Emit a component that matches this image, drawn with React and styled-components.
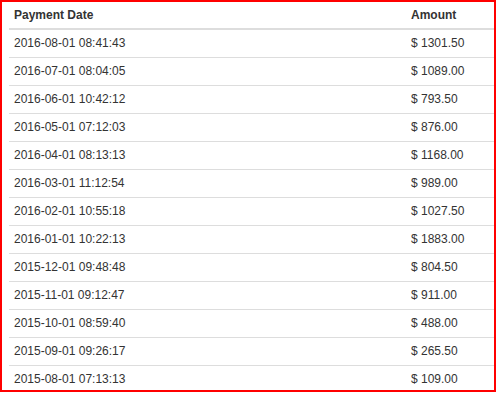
import React from "react";
import styled, { createGlobalStyle } from "styled-components";

const GlobalStyle = createGlobalStyle`
  html, body {
    margin: 0;
    padding: 0;
    background: #fff;
  }
  body {
    font-family: "Liberation Sans", Arial, sans-serif;
  }
`;

const payments = [
  { date: "2016-08-01 08:41:43", amount: "1301.50" },
  { date: "2016-07-01 08:04:05", amount: "1089.00" },
  { date: "2016-06-01 10:42:12", amount: "793.50" },
  { date: "2016-05-01 07:12:03", amount: "876.00" },
  { date: "2016-04-01 08:13:13", amount: "1168.00" },
  { date: "2016-03-01 11:12:54", amount: "989.00" },
  { date: "2016-02-01 10:55:18", amount: "1027.50" },
  { date: "2016-01-01 10:22:13", amount: "1883.00" },
  { date: "2015-12-01 09:48:48", amount: "804.50" },
  { date: "2015-11-01 09:12:47", amount: "911.00" },
  { date: "2015-10-01 08:59:40", amount: "488.00" },
  { date: "2015-09-01 09:26:17", amount: "265.50" },
  { date: "2015-08-01 07:13:13", amount: "109.00" },
];

const PaymentBox = styled.div`
  box-sizing: border-box;
  width: 496px;
  height: 392px;
  border: 2px solid #ff0000;
  padding: 0 0 0 7px;
  overflow: hidden;
`;

const PaymentTable = styled.table`
  width: 485px;
  border-collapse: separate;
  border-spacing: 0;
  table-layout: fixed;
  font-size: 12px;
  line-height: 17px;
  color: #333;
`;

const HeadCell = styled.th`
  box-sizing: border-box;
  text-align: left;
  font-weight: bold;
  color: #333;
  padding: 5px 5px 4px;
  border-bottom: 2px solid #ddd;
  width: ${(props) => props.$width}px;
`;

const Row = styled.tr`
  &:first-child td {
    border-top: 0;
  }
`;

const Cell = styled.td`
  padding: 5px 5px;
  border-top: 1px solid #ddd;
  white-space: nowrap;
`;

const App = () => {
  return (
    <>
      <GlobalStyle />
      <PaymentBox>
        <PaymentTable>
          <thead>
            <tr>
              <HeadCell $width={397}>Payment Date</HeadCell>
              <HeadCell $width={88}>Amount</HeadCell>
            </tr>
          </thead>
          <tbody>
            {payments.map((p) => (
              <Row key={p.date}>
                <Cell>{p.date}</Cell>
                <Cell>$ {p.amount}</Cell>
              </Row>
            ))}
          </tbody>
        </PaymentTable>
      </PaymentBox>
    </>
  );
};

export default App;
